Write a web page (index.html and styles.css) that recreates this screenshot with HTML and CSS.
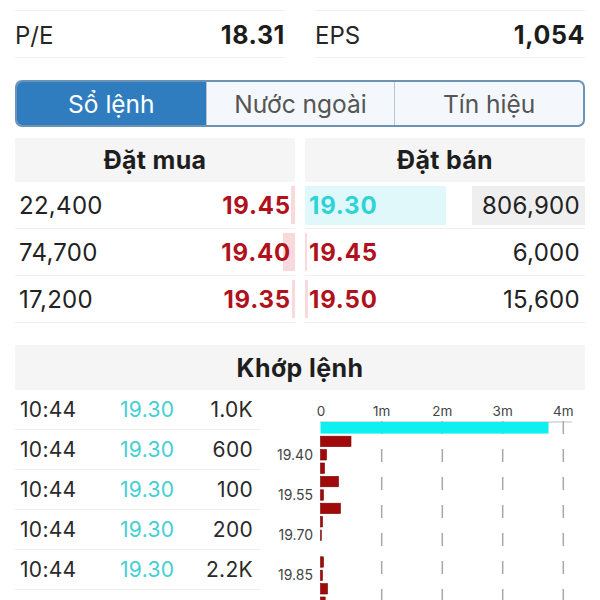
FILE: index.html
```html
<!DOCTYPE html>
<html lang="vi">
<head>
    <meta charset="UTF-8">
    <meta name="viewport" content="width=device-width, initial-scale=1.0">
    <title>Sổ lệnh</title>
    <link rel="stylesheet" href="styles.css">
</head>
<body>
    <div class="page">
        <div class="stats">
            <div class="stat"><span class="stat-label">P/E</span><span class="stat-value">18.31</span></div>
            <div class="stat"><span class="stat-label">EPS</span><span class="stat-value">1,054</span></div>
        </div>

        <div class="tabs">
            <div class="tab active">Sổ lệnh</div>
            <div class="tab">Nước ngoài</div>
            <div class="tab">Tín hiệu</div>
        </div>

        <div class="book">
            <div class="side buy">
                <div class="side-head">Đặt mua</div>
                <div class="row"><span class="vbar" style="width:4px"></span><span class="qty">22,400</span><span class="price">19.45</span></div>
                <div class="row"><span class="vbar" style="width:12px"></span><span class="qty">74,700</span><span class="price">19.40</span></div>
                <div class="row"><span class="vbar" style="width:3px"></span><span class="qty">17,200</span><span class="price">19.35</span></div>
            </div>
            <div class="side sell">
                <div class="side-head">Đặt bán</div>
                <div class="row"><span class="price match">19.30</span><span class="qty hi">806,900</span></div>
                <div class="row"><span class="vbar" style="width:2px"></span><span class="price">19.45</span><span class="qty">6,000</span></div>
                <div class="row"><span class="vbar" style="width:3px"></span><span class="price">19.50</span><span class="qty">15,600</span></div>
            </div>
        </div>

        <div class="matched">
            <div class="matched-head">Khớp lệnh</div>
            <div class="matched-body">
                <div class="trades">
                    <div class="trade"><span class="t-time">10:44</span><span class="t-price">19.30</span><span class="t-vol">1.0K</span></div>
                    <div class="trade"><span class="t-time">10:44</span><span class="t-price">19.30</span><span class="t-vol">600</span></div>
                    <div class="trade"><span class="t-time">10:44</span><span class="t-price">19.30</span><span class="t-vol">100</span></div>
                    <div class="trade"><span class="t-time">10:44</span><span class="t-price">19.30</span><span class="t-vol">200</span></div>
                    <div class="trade"><span class="t-time">10:44</span><span class="t-price">19.30</span><span class="t-vol">2.2K</span></div>
                </div>
                <svg class="chart" width="340" height="210" viewBox="0 0 340 210">
                    <g class="ticks">
                        <text x="61" y="26">0</text>
                        <text x="121.7" y="26">1m</text>
                        <text x="182.3" y="26">2m</text>
                        <text x="242.7" y="26">3m</text>
                        <text x="303.3" y="26">4m</text>
                    </g>
                    <line x1="60" y1="32" x2="312" y2="32" stroke="#d4d4d4" stroke-width="1.5"/>
                    <g class="grid">
                        <line x1="121.7" y1="31" x2="121.7" y2="210"/>
                        <line x1="182.3" y1="31" x2="182.3" y2="210"/>
                        <line x1="242.7" y1="31" x2="242.7" y2="210"/>
                        <line x1="303.3" y1="31" x2="303.3" y2="210"/>
                    </g>
                    <rect x="60.5" y="32" width="228" height="11.6" fill="#0ef0f0"/>
                    <g class="bars">
                        <rect x="60.5" y="46.2" width="30.5" height="10.4"/>
                        <rect x="60.5" y="59.6" width="6" height="10.4"/>
                        <rect x="60.5" y="73" width="4" height="10.4"/>
                        <rect x="60.5" y="86.4" width="18" height="10.4"/>
                        <rect x="60.5" y="99.8" width="3" height="10.4"/>
                        <rect x="60.5" y="113.2" width="20" height="10.4"/>
                        <rect x="60.5" y="126.6" width="2" height="10.4"/>
                        <rect x="60.5" y="140" width="0.8" height="10.4"/>
                        <rect x="60.5" y="166.8" width="3" height="10.4"/>
                        <rect x="60.5" y="180.2" width="2" height="10.4"/>
                        <rect x="60.5" y="193.6" width="7" height="10.4"/>
                        <rect x="60.5" y="207" width="4.7" height="10.4"/>
                    </g>
                    <g class="labels">
                        <text x="53" y="70">19.40</text>
                        <text x="53" y="110">19.55</text>
                        <text x="53" y="150">19.70</text>
                        <text x="53" y="190">19.85</text>
                    </g>
                </svg>
            </div>
        </div>
    </div>
</body>
</html>
```

FILE: styles.css
```css
body {
    margin: 0;
    font-family: Inter, "Noto Sans", sans-serif;
    background-color: #ffffff;
    color: #222;
    overflow: hidden;
}
.page {
    padding: 0 15px;
}
.stats {
    display: grid;
    grid-template-columns: 1fr 1fr;
    gap: 30px;
    margin-top: 10px;
}
.stat {
    display: flex;
    justify-content: space-between;
    align-items: center;
    height: 48px;
    padding-top: 2px;
    box-sizing: border-box;
    border-top: 1px solid #f0f0f0;
    border-bottom: 1px solid #f0f0f0;
    font-size: 24px;
}
.stat-label {
    color: #262626;
}
.stat-value {
    font-size: 25px;
    font-weight: 700;
    letter-spacing: 0.6px;
    color: #1c1c1c;
}
.tabs {
    display: grid;
    grid-template-columns: 1fr 1fr 1fr;
    margin-top: 22px;
    height: 43px;
    border: 2px solid #6b93b5;
    border-radius: 7px;
    overflow: hidden;
    background-color: #f4f8fc;
}
.tab {
    display: flex;
    justify-content: center;
    align-items: center;
    font-size: 24.5px;
    color: #555;
    border-left: 1px solid #b9c6d2;
}
.tab:first-child {
    border-left: none;
}
.tab.active {
    background-color: #2f7dbf;
    color: #ffffff;
}
.book {
    display: grid;
    grid-template-columns: 1fr 1fr;
    gap: 10px;
    margin-top: 11px;
}
.side-head {
    display: flex;
    justify-content: center;
    align-items: center;
    height: 44px;
    background-color: #f5f5f5;
    font-size: 25px;
    font-weight: 700;
    letter-spacing: 0.3px;
    color: #1e1e1e;
}
.row {
    position: relative;
    display: flex;
    justify-content: space-between;
    align-items: center;
    height: 46px;
    border-bottom: 1px solid #eeeeee;
    font-size: 24px;
}
.vbar {
    position: absolute;
    top: 4px;
    bottom: 4px;
    background-color: #f9d9dc;
}
.buy .vbar {
    right: 0;
}
.sell .vbar {
    left: 0;
}
.qty, .price {
    position: relative;
    display: flex;
    align-items: center;
    height: 39px;
}
.qty {
    letter-spacing: 0.3px;
}
.buy .qty {
    padding-left: 4px;
}
.buy .price {
    padding-right: 4px;
}
.sell .price {
    padding-left: 4px;
}
.sell .qty {
    padding-right: 5px;
}
.price {
    color: #b0111c;
    font-weight: 700;
    letter-spacing: 0.8px;
}
.price.match {
    width: 137px;
    color: #2ed3d8;
    background-color: #e1f8fa;
}
.qty.hi {
    width: 108px;
    justify-content: flex-end;
    background-color: #efefef;
}
.matched {
    margin-top: 22px;
}
.matched-head {
    display: flex;
    justify-content: center;
    align-items: center;
    height: 45px;
    background-color: #f5f5f5;
    font-size: 25px;
    font-weight: 700;
    letter-spacing: 0.4px;
    color: #1e1e1e;
}
.matched-body {
    display: flex;
}
.trades {
    width: 245px;
    flex-shrink: 0;
}
.trade {
    display: grid;
    grid-template-columns: 100px 70px 1fr;
    align-items: center;
    height: 39px;
    padding: 0 7px 0 5px;
    border-bottom: 1px solid #eeeeee;
    font-size: 21px;
    letter-spacing: 0.3px;
    color: #2a2a2a;
}
.t-price {
    color: #45cfd3;
}
.t-vol {
    text-align: right;
}
.chart {
    flex-shrink: 0;
    display: block;
}
.ticks text {
    font-family: Inter, sans-serif;
    font-size: 13.5px;
    fill: #444;
    text-anchor: middle;
}
.labels text {
    font-family: Inter, sans-serif;
    font-size: 14px;
    fill: #444;
    text-anchor: end;
}
.grid line {
    stroke: #a8a8a8;
    stroke-width: 1.5;
    stroke-dasharray: 13 15;
}
.bars rect {
    fill: #a00a0a;
    stroke: #7a0000;
    stroke-width: 0.6;
}
```
